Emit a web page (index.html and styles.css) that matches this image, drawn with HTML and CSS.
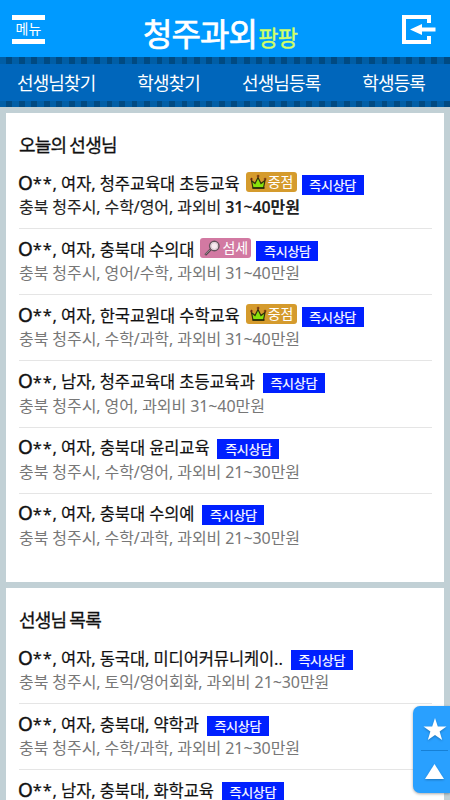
FILE: index.html
```html
<!DOCTYPE html>
<html lang="ko">
<head>
<meta charset="utf-8">
<title>청주과외팡팡</title>
<link rel="stylesheet" href="styles.css">
</head>
<body>
<svg class="defs" width="0" height="0" aria-hidden="true">
  <symbol id="crown" viewBox="0 0 17 16">
    <path d="M3 14 1.5 6.5 5 9.5 8 3.5 11 9.5 15 6.5 13.5 14Z" fill="#87e30b" stroke="#30300b" stroke-width="1.2"/>
    <path d="M2.5 14h12" stroke="#222808" stroke-width="1.6"/>
    <path d="M6.8 2h2.6M8.1.8v2.8M.2 5h2.6M1.5 3.8v2.6M13.8 5h2.6M15.1 3.8v2.6" stroke="#6b2811" stroke-width="1"/>
  </symbol>
  <symbol id="lens" viewBox="0 0 17 16">
    <path d="M1.2 15 6.5 9.7" stroke="#54454c" stroke-width="2.4"/>
    <path d="M1.4 14.4 6.2 9.6" stroke="#b7a9ad" stroke-width=".8"/>
    <circle cx="10.3" cy="6" r="4.7" fill="#f7e9ef" stroke="#66535d" stroke-width="1.5"/>
    <circle cx="10.3" cy="6" r="3.4" fill="none" stroke="#d6c9ce" stroke-width="1"/>
  </symbol>
</svg>
<header class="top">
  <div class="menu">메뉴</div>
  <h1 class="logo">청주과외<span>팡팡</span></h1>
  <svg class="login" width="34" height="29" viewBox="0 0 34 29">
    <path d="M27 8V2H2v25h25v-6" fill="none" stroke="#fff" stroke-width="4"/>
    <path d="M8 14.5 20 9v3.5h13.5v4H20V20Z" fill="#fff"/>
  </svg>
</header>
<nav class="nav">
  <a>선생님찾기</a><a>학생찾기</a><a>선생님등록</a><a>학생등록</a>
</nav>
<main class="page">
  <section class="card first">
    <h2>오늘의 선생님</h2>
    <ul>
      <li class="hot"><div class="name"><b>O</b><i>**</i>, 여자, 청주교육대 초등교육<span class="tag gold"><svg><use href="#crown"/></svg>중점</span><span class="call">즉시상담</span></div><p>충북 청주시, 수학/영어, 과외비 <strong>31~40만원</strong></p></li>
      <li><div class="name"><b>O</b><i>**</i>, 여자, 충북대 수의대<span class="tag pink"><svg><use href="#lens"/></svg>섬세</span><span class="call">즉시상담</span></div><p>충북 청주시, 영어/수학, 과외비 31~40만원</p></li>
      <li><div class="name"><b>O</b><i>**</i>, 여자, 한국교원대 수학교육<span class="tag gold"><svg><use href="#crown"/></svg>중점</span><span class="call">즉시상담</span></div><p>충북 청주시, 수학/과학, 과외비 31~40만원</p></li>
      <li><div class="name"><b>O</b><i>**</i>, 남자, 청주교육대 초등교육과<span class="call">즉시상담</span></div><p>충북 청주시, 영어, 과외비 31~40만원</p></li>
      <li><div class="name"><b>O</b><i>**</i>, 여자, 충북대 윤리교육<span class="call">즉시상담</span></div><p>충북 청주시, 수학/영어, 과외비 21~30만원</p></li>
      <li><div class="name"><b>O</b><i>**</i>, 여자, 충북대 수의예<span class="call">즉시상담</span></div><p>충북 청주시, 수학/과학, 과외비 21~30만원</p></li>
    </ul>
  </section>
  <section class="card">
    <h2>선생님 목록</h2>
    <ul>
      <li><div class="name"><b>O</b><i>**</i>, 여자, 동국대, 미디어커뮤니케이..<span class="call">즉시상담</span></div><p>충북 청주시, 토익/영어회화, 과외비 21~30만원</p></li>
      <li><div class="name"><b>O</b><i>**</i>, 여자, 충북대, 약학과<span class="call">즉시상담</span></div><p>충북 청주시, 수학/과학, 과외비 21~30만원</p></li>
      <li class="cut"><div class="name"><b>O</b><i>**</i>, 남자, 충북대, 화학교육<span class="call">즉시상담</span></div></li>
    </ul>
  </section>
</main>
<aside class="quick">
  <svg width="24" height="23" viewBox="0 0 24 23"><path d="M12 0 14.8 8.4H23.5L16.6 13.5 19.2 22 12 16.9 4.8 22 7.4 13.5.5 8.4H9.2Z" fill="#fff"/></svg>
  <hr>
  <svg width="19" height="15" viewBox="0 0 19 15"><path d="M9.5 0 19 15H0Z" fill="#fff"/></svg>
</aside>
</body>
</html>
```
FILE: styles.css
```css
* { box-sizing: border-box; margin: 0; padding: 0; }
html { height: 100%; overflow: hidden; }
body {
  height: 800px;
  overflow: hidden;
  background: #c1d0d5;
  color: #111;
  font-family: "Noto Sans", "Noto Sans CJK KR", sans-serif;
  display: flex;
  flex-direction: column;
}
.defs { position: absolute; }
.top {
  flex: none;
  height: 57px;
  padding: 0 15px 0 12px;
  background: #009aff;
  display: grid;
  grid-template-columns: 34px 1fr 34px;
  color: #fff;
}
.menu {
  width: 33px;
  height: 29px;
  margin-top: 15px;
  border-top: 5px solid #fff;
  border-bottom: 5px solid #fff;
  font-size: 14px;
  line-height: 17px;
  text-align: center;
  white-space: nowrap;
}
.logo {
  padding-left: 97px;
  font-size: 32px;
  font-weight: 400;
  line-height: 67px;
  letter-spacing: -.9px;
  white-space: nowrap;
  -webkit-text-stroke: .7px currentColor;
}
.logo span {
  margin-left: 1px;
  color: #d2ff66;
  font-size: 22px;
  letter-spacing: -.6px;
  -webkit-text-stroke: .4px currentColor;
}
.login { margin-top: 15px; margin-left: 1px; }
.nav {
  flex: none;
  height: 50px;
  padding: 7px 25px 6px 17px;
  display: flex;
  justify-content: space-between;
  background:
    repeating-linear-gradient(90deg, #005ea6 0 6.5px, #004a82 6.5px 12.5px) 0 0 / 100% 7px no-repeat,
    repeating-linear-gradient(90deg, #005ea6 0 6.5px, #004a82 6.5px 12.5px) 0 100% / 100% 6px no-repeat,
    #0066bb;
  color: #fff;
  font-size: 18px;
  letter-spacing: -.9px;
  line-height: 38px;
  white-space: nowrap;
}
.page { padding: 6px 6px 0; display: flex; flex-direction: column; gap: 6px; flex: 1; min-height: 0; }
.card { flex: 1; min-height: 0; overflow: hidden; padding: 17px 12px 0 13px; background: #fff; }
.first { flex: none; height: 469px; }
h2 {
  height: 41px;
  font-size: 18px;
  font-weight: 400;
  line-height: 31px;
  letter-spacing: -.75px;
  word-spacing: -1px;
  -webkit-text-stroke: .3px currentColor;
}
ul { list-style: none; }
li { height: 58px; margin-bottom: 8.2px; border-bottom: 1px solid #e5e5e5; white-space: nowrap; }
li:last-child { border: 0; }
.cut { height: 25px; margin: 0; }
.name {
  height: 23px;
  margin-bottom: 2px;
  display: flex;
  align-items: center;
  white-space: pre;
  font-size: 16.5px;
  letter-spacing: -.1px;
  -webkit-text-stroke: .2px currentColor;
}
.name b { font-size: 19px; font-weight: 400; margin-left: -1px; -webkit-text-stroke: .4px currentColor; }
.name i { font-style: normal; letter-spacing: .8px; }
p { font-size: 16px; line-height: 23px; color: #777; letter-spacing: -.08px; }
.hot p { color: #222; -webkit-text-stroke: .15px currentColor; }
.hot strong { font-weight: 600; letter-spacing: -.1px; -webkit-text-stroke: 0; }
.call {
  width: 62px;
  height: 20px;
  margin: 4px 0 0 8px;
  background: #0020ff;
  color: #fff;
  font-size: 13px;
  line-height: 20px;
  text-align: center;
  letter-spacing: -.3px;
}
.tag {
  width: 51px;
  height: 20px;
  margin: 0 0 2px 6px;
  padding-left: 4px;
  display: flex;
  align-items: center;
  gap: 1px;
  border-radius: 3px;
  color: #fff;
  font-size: 14px;
  line-height: 20px;
  -webkit-text-stroke: 0;
}
.tag svg { width: 17px; height: 16px; flex: none; }
.tag + .call { margin-left: 5px; }
.gold { background: #d59b2d; }
.pink { background: #d279a2; }
.quick {
  position: absolute;
  right: 0;
  top: 706px;
  width: 37px;
  height: 87px;
  padding: 12px 0 0 6px;
  border-radius: 7px 0 0 7px;
  background: #29a0ff;
  box-shadow: 0 1px 3px #0005;
  display: flex;
  flex-direction: column;
  align-items: center;
}
.quick svg { filter: drop-shadow(0 1px 1px #0004); flex: none; }
.quick hr { width: 27px; height: 1px; margin: 9px 0 13px; border: 0; background: #1680d6; flex: none; }
```
